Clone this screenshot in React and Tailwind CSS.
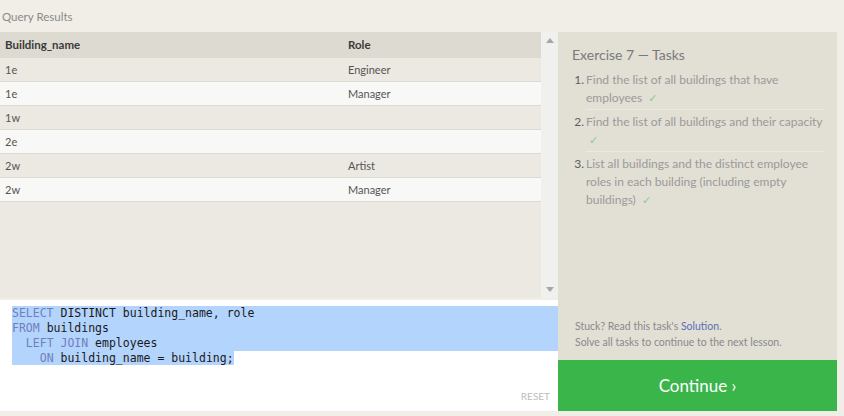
import React from 'react';

const rows = [
  { name: '1e', role: 'Engineer' },
  { name: '1e', role: 'Manager' },
  { name: '1w', role: '' },
  { name: '2e', role: '' },
  { name: '2w', role: 'Artist' },
  { name: '2w', role: 'Manager' },
];

const tasks = [
  'Find the list of all buildings that have employees',
  'Find the list of all buildings and their capacity',
  'List all buildings and the distinct employee roles in each building (including empty buildings)',
];

const ui = { fontFamily: 'Lato, "Noto Sans", sans-serif' };
const mono = { fontFamily: '"DejaVu Sans Mono", "Liberation Mono", monospace' };

const Arrow = ({ up }) => (
  <svg width="8" height="5" viewBox="0 0 8 5" className="block">
    <path d={up ? 'M0 5 L4 0 L8 5 Z' : 'M0 0 L8 0 L4 5 Z'} fill="#a6a6a6" />
  </svg>
);

const Kw = ({ children }) => <span className="text-[#6f7fbd]">{children}</span>;

const App = () => {
  return (
    <div className="w-[844px] h-[416px] bg-[#f1eee7] flex flex-col overflow-hidden" style={ui}>
      <div className="h-[32px] pl-[2px] pt-[9px] text-[11.5px] leading-[16px] text-[#8a8a8a]">Query Results</div>

      <div className="flex h-[379px]">
        {/* left: results + editor */}
        <div className="w-[558px] flex flex-col">
          <div className="h-[266px] flex bg-[#ebe9e2]">
            <div className="flex-1">
              <div className="flex h-[26px] items-center pb-[1px] bg-[#dddbd1] text-[11.5px] font-bold text-[#3a3a3a]">
                <div className="w-[343px] pl-[5px]">Building_name</div>
                <div className="flex-1 pl-[5px]">Role</div>
              </div>
              {rows.map((r, i) => (
                <div
                  key={i}
                  className={`flex h-[24px] items-center pt-[2px] border-b border-[#dcdad2] text-[11px] text-[#555] ${i % 2 ? 'bg-[#f8f8f7]' : 'bg-[#ebe9e2]'}`}
                >
                  <div className="w-[343px] pl-[5px]">{r.name}</div>
                  <div className="flex-1 pl-[5px]">{r.role}</div>
                </div>
              ))}
            </div>
            <div className="w-[17px] bg-[#f0f0ef] flex flex-col items-center justify-between py-[6px]">
              <Arrow up />
              <Arrow />
            </div>
          </div>

          <div className="flex-1 bg-white flex flex-col border-t-2 border-[#f1eee7]">
            <div className="pt-[6px] pl-[12px] text-[11.5px] leading-[15px] text-[#1a1a1a] whitespace-pre" style={mono}>
              <div className="bg-[#b3d4fc]"><Kw>SELECT</Kw> DISTINCT building_name, role</div>
              <div className="bg-[#b3d4fc]"><Kw>FROM</Kw> buildings</div>
              <div className="bg-[#b3d4fc]">  <Kw>LEFT JOIN</Kw> employees</div>
              <div>
                <span className="bg-[#b3d4fc]">    <Kw>ON</Kw> building_name = building;</span>
              </div>
            </div>
            <div className="mt-auto self-end pr-[8px] pb-[7px] text-[10px] text-[#bdbdbd]">RESET</div>
          </div>
        </div>

        {/* right: tasks */}
        <div className="w-[279px] flex flex-col">
          <div className="flex-1 bg-[#e2dfd5] flex flex-col pl-[14px] pr-[12px]">
            <div className="pt-[14px] text-[14px] leading-[18px] text-[#7a7a7a]">Exercise 7 — Tasks</div>
            <ol className="mt-[6px] text-[12px] leading-[18px]">
              {tasks.map((t, i) => (
                <li key={i} className="flex pt-[1px] pb-[2px]">
                  <span className="w-[14px] shrink-0 text-right pr-[2px] text-[#5e5e5e]">{i + 1}.</span>
                  <span className={`flex-1 text-[#9a9a9a] pb-[1px] ${i < 2 ? 'border-b border-[#ece9e2]' : ''}`}>
                    {t}{' '}
                    <span className="inline-block ml-[3px] text-[11px] leading-[18px] text-[#8fca8f]" style={{ fontFamily: '"DejaVu Sans", sans-serif' }}>
                      ✓
                    </span>
                  </span>
                </li>
              ))}
            </ol>
            <div className="mt-auto pl-[3px] pb-[10px] text-[10.5px] leading-[16px] text-[#8a8a8a]">
              <div>
                Stuck? Read this task's <span className="text-[#5b6fb4]">Solution</span>.
              </div>
              <div>Solve all tasks to continue to the next lesson.</div>
            </div>
          </div>
          <div className="h-[51px] bg-[#3ab54a] flex items-center justify-center text-white text-[17px]">
            Continue ›
          </div>
        </div>
      </div>
    </div>
  );
};

export default App;
